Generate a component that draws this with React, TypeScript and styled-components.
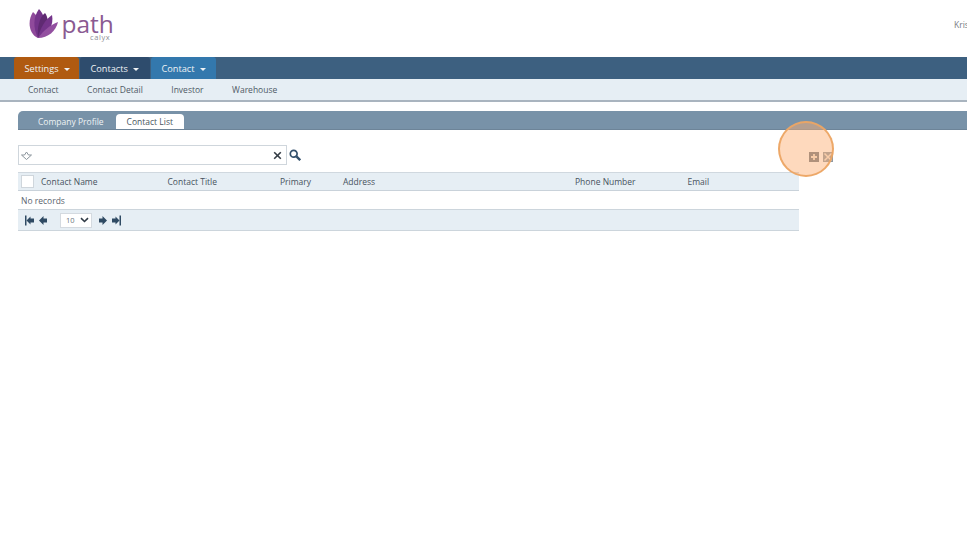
import React from "react";
import styled, { createGlobalStyle } from "styled-components";

const Global = createGlobalStyle`
  html, body { margin: 0; padding: 0; background: #fff; overflow: hidden; }
  body { font-family: "Open Sans", "Liberation Sans", sans-serif; color: #4a5560; }
`;
const Page = styled.div`
  position: relative;
  width: 967px;
  height: 539px;
  overflow: hidden;
  background: #fff;
`;
const Header = styled.header`
  height: 57px;
  display: flex;
  justify-content: space-between;
  padding-left: 28px;
  box-sizing: border-box;
`;
const UserName = styled.span`
  font-size: 8.5px;
  color: #777c84;
  margin-top: 19px;
  width: 13px;
  overflow: hidden;
  white-space: nowrap;
`;
const NavBar = styled.nav`
  height: 22px;
  background: #3d6080;
  display: flex;
  padding-left: 14px;
`;
const NavItem = styled.div<{ $bg: string; $w: number }>`
  width: ${(p) => p.$w}px;
  background: ${(p) => p.$bg};
  color: #eef1f4;
  font-size: 9.2px;
  display: flex;
  align-items: center;
  padding-left: 10.5px;
  box-sizing: border-box;
  border-radius: 3px 3px 0 0;
  margin-right: 1px;
  gap: 5px;
`;
const Caret = styled.span`
  width: 0;
  height: 0;
  border-left: 3px solid transparent;
  border-right: 3px solid transparent;
  border-top: 3px solid #eef1f4;
  margin-top: 2px;
`;
const SubNav = styled.div`
  background: #e6eef4;
  border-bottom: 2px solid #a9b4bf;
  display: flex;
  align-items: center;
  height: 20px;
  padding: 0 0 1px 28px;
  box-sizing: content-box;
  margin-bottom: -1px;
  gap: 28.5px;
  font-size: 8.5px;
  color: #4f5a66;
`;
const Content = styled.main`
  padding: 10px 0 0 18px;
`;
const TabBar = styled.div`
  height: 19px;
  background: #7892a8;
  border-radius: 5px 0 0 0;
  border-bottom: 1px solid #6d8498;
  box-sizing: border-box;
  display: flex;
  align-items: flex-end;
  padding-left: 9px;
  gap: 1px;
`;
const Tab = styled.div<{ $active?: boolean }>`
  height: 15px;
  padding: 0 11px;
  font-size: 8.5px;
  display: flex;
  align-items: center;
  border-radius: 4px 4px 0 0;
  color: ${(p) => (p.$active ? "#4a5560" : "#eef2f5")};
  background: ${(p) => (p.$active ? "#fff" : "transparent")};
`;
const Toolbar = styled.div`
  width: 815px;
  height: 20px;
  margin-top: 15px;
  display: flex;
  align-items: center;
  justify-content: space-between;
`;
const SearchGroup = styled.div`
  display: flex;
  align-items: center;
  gap: 2px;
`;
const SearchBox = styled.div`
  width: 269px;
  height: 20px;
  box-sizing: border-box;
  border: 1px solid #cfd6dc;
  display: flex;
  align-items: center;
  justify-content: space-between;
  padding: 0 4px 0 2px;
`;
const SearchIcon = styled.svg`
  margin-top: -1px;
`;
const Actions = styled.div`
  display: flex;
  gap: 4px;
  margin-top: 4px;
`;
const ActionBtn = styled.span<{ $bg: string }>`
  width: 10px;
  height: 10px;
  background: ${(p) => p.$bg};
  display: flex;
`;
const Grid = styled.section`
  width: 781px;
  margin-top: 7px;
  font-size: 8.5px;
`;
const HeadRow = styled.div`
  height: 19px;
  background: #e6eef4;
  border-top: 1px solid #d0d8df;
  border-bottom: 1px solid #c9d2da;
  box-sizing: border-box;
  display: grid;
  grid-template-columns: 23px 126.5px 112.5px 63px 232px 112.5px 1fr;
  align-items: center;
  color: #46525e;
  font-weight: 500;
`;
const CheckCell = styled.span`
  width: 11px;
  height: 11px;
  margin-left: 3px;
  background: #fff;
  border: 1px solid #cfd6dc;
`;
const EmptyRow = styled.div`
  height: 18px;
  padding-left: 3px;
  display: flex;
  align-items: center;
  color: #5a646e;
`;
const Pager = styled.div`
  height: 22px;
  background: #e6eef4;
  border-top: 1px solid #ccd5dc;
  border-bottom: 1px solid #ccd5dc;
  box-sizing: border-box;
  display: flex;
  align-items: center;
  padding-left: 7px;
`;
const PagerIcons = styled.span`
  display: flex;
  align-items: center;
  gap: 5px;
`;
const PageSize = styled.div`
  width: 32px;
  height: 15px;
  margin: 0 7px 0 13px;
  box-sizing: border-box;
  background: #fff;
  border: 1px solid #d4dae0;
  display: flex;
  align-items: center;
  justify-content: space-between;
  padding: 0 2px 0 5px;
  font-size: 7.5px;
  color: #6c7680;
`;
const Highlight = styled.div`
  position: absolute;
  left: 778px;
  top: 121px;
  width: 56px;
  height: 56px;
  box-sizing: border-box;
  border-radius: 50%;
  background: rgba(252, 175, 115, 0.47);
  border: 2px solid rgba(236, 165, 100, 0.95);
`;

const Logo = () => (
  <svg width="90" height="44" viewBox="0 0 90 44" style={{ display: "block" }}>
    <path d="M10 38C1 34 -1 21 5 12C11 17 15 28 10 38Z" fill="#8f4a9b" />
    <path d="M10 38C5 28 5 17 11 9C18 16 19 29 10 38Z" fill="#74348a" />
    <path d="M10 38C9 28 11 18 17 13C22 20 21 32 10 38Z" fill="#5f2a72" />
    <path d="M10 38C12 28 17 20 24 15C26 25 21 34 10 38Z" fill="#74348a" />
    <path d="M10 38C16 30 22 25 30 22C28 31 20 38 10 38Z" fill="#9350a0" />
    <text x="33.5" y="33" fontFamily="'Open Sans', sans-serif" fontSize="24.5" fontWeight="400" fill="#8a5a92">path</text>
    <text x="62" y="40" fontFamily="'Open Sans', sans-serif" fontSize="7.5" letterSpacing="0.6" fill="#8f8f96">calyx</text>
  </svg>
);

const Pin = () => (
  <svg width="11" height="9" viewBox="0 0 11 9" fill="none" stroke="#8a949c" strokeWidth="1">
    <path d="M.5 4H3.5L5.5 1L7.5 4H10.5L5.5 8.5Z" />
  </svg>
);
const Clear = () => (
  <svg width="9" height="9" viewBox="0 0 9 9" stroke="#333b44" strokeWidth="1.6">
    <path d="M1.2 1.2L7.8 7.8M7.8 1.2L1.2 7.8" />
  </svg>
);
const Search = () => (
  <SearchIcon width="12" height="12" viewBox="0 0 12 12" fill="none">
    <circle cx="4.7" cy="4.7" r="3.4" stroke="#33506c" strokeWidth="1.7" />
    <path d="M7.4 7.4L11.2 11.2" stroke="#33506c" strokeWidth="2.4" />
  </SearchIcon>
);
const Plus = () => (
  <svg width="10" height="10" viewBox="0 0 10 10" stroke="#f4e6d8" strokeWidth="1.8">
    <path d="M5 2V8M2 5H8" />
  </svg>
);
const Cross = () => (
  <svg width="10" height="10" viewBox="0 0 10 10" stroke="#f6e8da" strokeWidth="1.5">
    <path d="M1.5 1.5L8.5 8.5M8.5 1.5L1.5 8.5" />
  </svg>
);
const Arrow = ({ dir, bar }: { dir: "l" | "r"; bar?: boolean }) => (
  <svg width={bar ? 9 : 8} height="11" viewBox={bar ? "0 0 9 11" : "0 0 8 11"} fill="#2f4a63"
    style={dir === "r" ? { transform: "scaleX(-1)" } : undefined}>
    {bar && <rect x="0" y="0.5" width="1.5" height="10" />}
    <path d={bar ? "M1.5 5.5L5.5 1.5V3.5H9V7.5H5.5V9.5Z" : "M0 5.5L4.5 1V3.5H8V7.5H4.5V10Z"} />
  </svg>
);
const Chevron = () => (
  <svg width="9" height="6" viewBox="0 0 9 6" fill="none" stroke="#2f3a45" strokeWidth="1.6">
    <path d="M1 1.2L4.5 4.5L8 1.2" />
  </svg>
);

const columns = ["Contact Name", "Contact Title", "Primary", "Address", "Phone Number", "Email"];

export default function App() {
  return (
    <Page>
      <Global />
      <Header>
        <Logo />
        <UserName>Kris</UserName>
      </Header>
      <NavBar>
        <NavItem $bg="#b05a10" $w={65}>Settings <Caret /></NavItem>
        <NavItem $bg="#2e4c6d" $w={70}>Contacts <Caret /></NavItem>
        <NavItem $bg="#3378ad" $w={65}>Contact <Caret /></NavItem>
      </NavBar>
      <SubNav>
        <span>Contact</span>
        <span>Contact Detail</span>
        <span>Investor</span>
        <span>Warehouse</span>
      </SubNav>
      <Content>
        <TabBar>
          <Tab>Company Profile</Tab>
          <Tab $active>Contact List</Tab>
        </TabBar>
        <Toolbar>
          <SearchGroup>
            <SearchBox><Pin /><Clear /></SearchBox>
            <Search />
          </SearchGroup>
          <Actions>
            <ActionBtn $bg="#6c7782"><Plus /></ActionBtn>
            <ActionBtn $bg="#8f99a2"><Cross /></ActionBtn>
          </Actions>
        </Toolbar>
        <Grid>
          <HeadRow>
            <CheckCell />
            {columns.map((c) => <span key={c}>{c}</span>)}
          </HeadRow>
          <EmptyRow>No records</EmptyRow>
          <Pager>
            <PagerIcons><Arrow dir="l" bar /><Arrow dir="l" /></PagerIcons>
            <PageSize>10<Chevron /></PageSize>
            <PagerIcons><Arrow dir="r" /><Arrow dir="r" bar /></PagerIcons>
          </Pager>
        </Grid>
      </Content>
      <Highlight />
    </Page>
  );
}
